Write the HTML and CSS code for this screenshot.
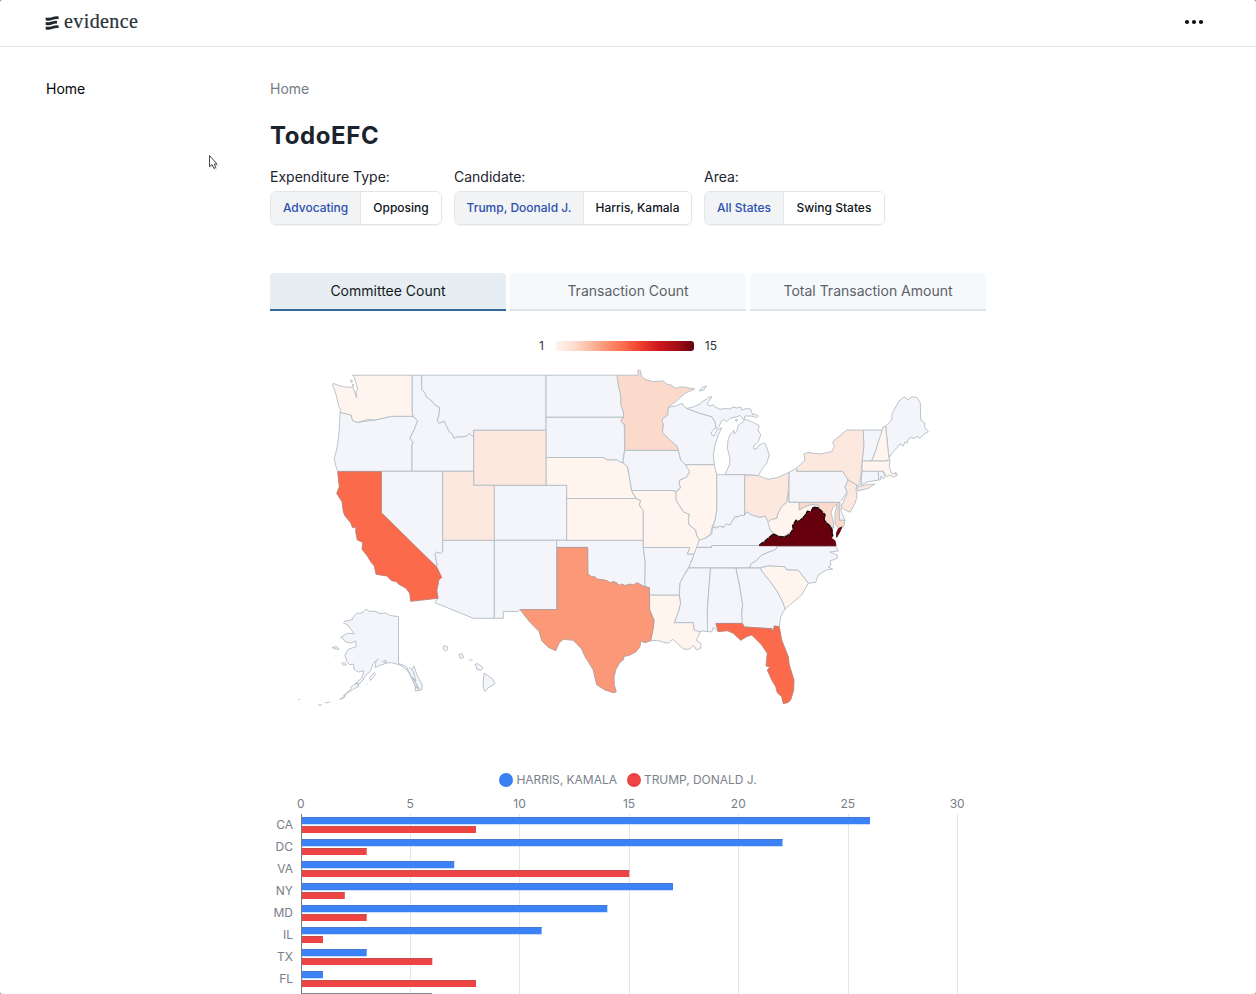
FILE: index.html
```html
<!DOCTYPE html>
<html lang="en">
<head>
<meta charset="utf-8">
<title>TodoEFC</title>
<link rel="stylesheet" href="styles.css">
</head>
<body>
<div class="page">
  <header class="topbar">
    <a class="logo">
      <svg class="logo-mark" width="14" height="14" viewBox="0 0 14 14"><path d="M.7 1.500Q3.700 2.300 6.800 1.200T13.600.400V3Q10.200 2.700 7 4T.7 4.200ZM.7 5.900Q3.700 6.700 6.800 5.600T12 4.900V7.500Q9.800 7.200 7 8.500T.7 8.700ZM.7 10.500Q3.700 11.300 6.800 10.200T13.600 9.400V12Q10.200 11.700 7 13T.7 13.400Z"/></svg>
      <span class="logo-text">evidence</span>
    </a>
    <svg class="more" width="20" height="6" viewBox="0 0 20 6"><circle cx="3" cy="3" r="2.1"/><circle cx="10" cy="3" r="2.1"/><circle cx="17" cy="3" r="2.1"/></svg>
  </header>
  <div class="layout">
    <nav class="sidebar"><a>Home</a></nav>
    <main class="content">
      <div class="crumb">Home</div>
      <h1>TodoEFC</h1>
      <div class="filters">
        <div class="filter"><label>Expenditure Type:</label><div class="group"><button class="on b1">Advocating</button><button class="b2">Opposing</button></div></div>
        <div class="filter"><label>Candidate:</label><div class="group"><button class="on b3">Trump, Doonald J.</button><button class="b4">Harris, Kamala</button></div></div>
        <div class="filter"><label>Area:</label><div class="group"><button class="on b5">All States</button><button class="b6">Swing States</button></div></div>
      </div>
      <div class="tabs"><div class="tab active">Committee Count</div><div class="tab">Transaction Count</div><div class="tab">Total Transaction Amount</div></div>
      <div class="scale"><span>1</span><i class="ramp"></i><span>15</span></div>
      <svg class="map" width="716" height="360" viewBox="270 360 716 360">
        <g class="s0">
          <path d="M340 412.3L340 416.7L339.3 430L337.3 446.7L334.3 458.3L336 466.7L337.7 471.3H412V445L413.3 442.7L410 438.3L414.3 429.3L417.7 420.7L413 416.3L391.7 416.3L375 420L357.7 422.3L352.7 420.7L351 415L347.3 414Z"/>
          <path d="M412 375.2H421.7V389.3L425.3 393.3L426 396.7L431.7 400.7L435 405L439.7 407.7L439.3 413.3L437.3 420.7L439.3 423.3L444 421L446 425L449.3 431.7L451.7 433.3L454.3 438.3L457.3 436.7L461 437L466.7 436L469.3 433.3L473.5 437V471.3H412V445L413.3 442.7L410 438.3L414.3 429.3L417.7 420.7L413 416.3L412 411.7Z"/>
          <path d="M421.7 375.2H546V430.3H473.5V437L469.3 433.3L466.7 436L461 437L457.3 436.7L454.3 438.3L451.7 433.3L449.3 431.7L446 425L444 421L439.3 423.3L437.3 420.7L439.3 413.3L439.7 407.7L435 405L431.7 400.7L426 396.7L425.3 393.3L421.7 389.3Z"/>
          <path d="M546 375.2H617L618.3 385L620.7 395L621 405L623.3 411.7L623.7 417.3H546Z"/>
          <path d="M546 417.3H623.7L620.7 420.7L624.3 425L624.6 450.3L623.7 455L623 461L623.7 463.3L620 462L617.3 460L607.3 460L603.3 457.5H546Z"/>
          <path d="M381.3 471.3H442.7V551.7L440.7 553.7L436.7 552L435 554L437.3 565L436 567L381.3 512.7Z"/>
          <path d="M494.3 485.3H566.7V540.3H494.3Z"/>
          <path d="M442.7 540.3H494.3V618.3H473.3L435 602.7L438 598L436.7 590L438.7 580L441.7 577.3L436 567L437.3 565L435 554L436.7 552L440.7 553.7L442.7 551.7Z"/>
          <path d="M494.3 540.3H556.7V609.5H520L518 611.5H503.3V618.3H494.3Z"/>
          <path d="M556.7 540.3H643.3V547.3L645.3 563.3L644.7 590L600 585L587 575V547.3H556.7Z"/>
          <path d="M624.8 450.3H678.3L679.3 454L680.7 460L685.3 464.3L688 468L689.7 471.7L686.7 477.3L680 480L679 483L680.7 486.7L676.7 491.3L673.3 490.5H631.5L630 481.7L628.7 473.3L627.3 466.7L623.7 463.3L623 461L624 455Z"/>
          <path d="M668 407.3L676.7 405.7L682.3 403.3L683.3 406L688.3 409L700 413.3L711.7 416.7L715 421.7L716 426.7L711.7 432L711.7 435L714 436L717 430L721.7 427.7L718.3 435L715 445L713.3 455L714.3 464.7H685.3L680.7 460L679.3 454L677.3 446.7L671.7 441.7L662.3 432.7L663.3 425L661.5 420L667.7 415Z"/>
          <path d="M686.5 408.5L693 407L700 404L703 401L706.7 399.3L709 397L712 396.7L708.3 401.7L707 404.5L710 406L713.3 404.7L715 407L720 409.3L725 408.500L730 409L733 407L737 408L740.7 406.7L741.7 410L746 408.500L750.7 409L752.7 415L755 414L758.3 416L756.7 417.7L751 416L745 416L744 420L740 415.5L736.7 416.7L730 418.3L726.7 421.7L724 419.5L721.7 420.7L719 426.7L716 429L715 421.7L711.7 416.7L700 413.3L688.3 409Z"/>
          <path d="M745 419.3L751.7 421.7L759.3 425.7L758 430L760.7 435L758.3 441.7L753.5 446L754 449L756.7 449L759 445L763.3 443.3L765.5 444L769.3 455L766.7 463.3L763.3 467.3L758.3 475.5L744.3 474.7H725L729.3 465L730 458.3L727.3 448.3L728 440L730 435L734 430L734 434L736.7 431.7L738.3 425L743.3 421.7Z"/>
          <path d="M699.3 391L702 387.5L706.5 386L703.5 390ZM736 419l1.5.8-.8 1.7-1.2-.8Z"/>
          <path d="M716.6 474.7H744.7V516L735 516.7L730 525L723.3 526.7L712.7 527.3L715 520L716.7 510Z"/>
          <path d="M643.3 547.5H690L687.3 554H694L693.3 556.7L689.3 566L683.3 576.7L680 583.3L679.3 595.2H649.4V587.7L644.7 586.7L645.3 563.3Z"/>
          <path d="M688.7 567.8H710.5L707.3 610L707.7 631.7L703 631L695 633L694 630L693.3 622.7H674.3L678.3 611.7L680.5 603.3L679.3 595L680 583.3L683.3 576.7Z"/>
          <path d="M710.5 568H736L740 588L742.7 605L741.7 613.3L742.7 623.3H716L718 631.7L713.3 627.3L712 631.7H707.5L707.3 610Z"/>
          <path d="M736 568H760.7L761.7 571L771.7 583.3L778.3 593.3L783.3 603.3L785 609L780.7 616.7L779.3 626.7L774 626L773.3 631.3L771.7 628.7L744.3 627L742.3 623.3L741.7 613.3L742.7 605L740 588Z"/>
          <path d="M699.3 540L701.7 536.7L706 538L711.7 534L712.7 527.3L717 528L720 526L723.3 527.7L726 524L730 525L735 516.7L738 517L741 515L744 516L746.7 511.7L751.7 515L760 517.3L765 516L768.3 520.7L770 529.3L773.3 534.3L759.3 545.5H711.7V547.3H695.7Z"/>
          <path d="M695.7 547.5H711.7V545.5H777.3L776 549.3L761.7 555L756 561L750.7 564L750 567.7H688.7L693.3 556.7Z"/>
          <path d="M777.3 546.3H836L838.3 551L830 552L837.3 555L837.3 558.3L830 561L831 565L828 567L832.7 569L826 570L818.3 575L815.7 582.3L808.3 583.3L798.3 570.3L786.7 570L785 566.7L768.3 566L760.7 567.7H750L750.7 564L756 561L761.7 555L776 549.3Z"/>
          <path d="M789 472.3L796.7 468.3V471.3H842.7L846 476.7L848.3 480L845 486.7L847.3 491.7L841.7 500L839.3 502.3H789Z"/>
          <path d="M863.3 430H881.7L882.7 435L878.3 441.7L876 450L871.7 461H862L863.8 446.7Z"/>
          <path d="M885.7 426L891.7 420L892 414L895 408.3L899 401L904.3 396.7L908.3 400L911 397L916.7 397.3L920.3 402.7L920.7 420L925 423.3L924.3 426.7L928.3 431.7L924 434L920 438.3L917 436.500L914 438.500L911 437.500L908.3 439.3L907 443L905 442L903.3 446L900 444L896.7 448L891.7 453.3L889 458.3L887.7 446.7Z"/>
          <path d="M862 471H878.3L878.7 480L868.3 481.7L861 485Z"/><path d="M878.3 471H882.7L885 476.7L883 479L881 476L880.5 480H878.7Z"/>
          <path d="M839 502.5L841.7 505L840.7 510L845 520.3H839.3Z"/>
          <path d="M366 609.3L370 611.5L375 611.2L380 613.5L386 613L390 615.5L398.5 616.7V663.3L405 666L411 671L414 666L417 675L422.3 685L421.7 690L416.7 690L413.3 678.3L406.7 670L400 665L391.7 662.7L388 663L385 660L384 664L379.3 665.500L375 667.7L376 661L378.3 659L373.3 663.3L370 671.7L366 675L361.7 681.7L356.7 686L352 690L343.3 696L353.3 686.7L358 681L361.7 678.3L364 670.7L358.3 672L354 669.3L353.3 664L350 665L346.7 661.7L345 655L348.3 649.3L356 646.7L355.7 641L351 643L345 641.7L343 638.5L340.7 637.3L347.3 633.3L354.3 634L350 628.3L348 625L343.3 622.7L345 621L351.7 620L354 616L356.7 613.3L362 613Z"/>
          <path d="M332 647.5l5-1 2 3-3-.5ZM341.500 663.500l3-1 2 2-3 1ZM369.500 677.500l5-5 1 2-5 6ZM366.500 684.500l1-1M345.500 695.500l-6 4 5-2ZM325 703l5-1M318 705h4M298.500 699.500h1.500M335 656h.7M407 668l4 8 5 5-3-10-4-4M409 674l6 7 3 8-3-3-4-9M413 679l7 11-5 1 1-6M350 688l6-5 3 3-5 3M355 684l3-1 1 4M382 661l5 2-3 1"/>
          <path d="M443.500 646l3.500.3 1 2.700-2.500 2-2.500-2ZM459 654.500l3-1 1.700 4-3.500 1ZM469 660.500l3.500-.8m2.500 4.500 3-.5 5 4-2 2.700-4-1-1-3ZM484 673l8 5.500 3 5-7 4.500-3 3.500-2-5Z"/>
        </g>
        <g class="s1">
          <path d="M352.3 375.200H412V411.7L413 416.3H391.7L375 420L368 419.5L357.7 422.3L352.7 420.7L351 415L347.3 414L340 412.3L341 409.3L339 407.5L337.3 399.5L335 391L332.7 386L333.3 383.3L340 386L348.3 387.3L352.500 387L354.7 391.7L356.7 397.7L356 391.7L357.7 389.3L355.7 381.7L354.3 377.3ZM350.5 380l2 .7-1 2ZM352.5 384l1.500 1-1 1.500Z"/>
          <path d="M546 457.500H603.3L607.3 460H617.3L620 462L623.7 463.3L627.3 466.7L628.7 473.3L630 481.7L631.3 490L636 498.500H566.7V485.300H546Z"/>
          <path d="M566.700 498.500H636L640.7 500.7L639.3 505L643.3 510.7V540.300H566.700Z"/>
          <path d="M631.500 490.500H673.3L676 492.3V500L683.3 511.7L689.3 514.3L688.3 520L689.3 525L695.7 530L696.7 535L699.3 540L696.7 547.3L694 554H687.3L690 547.500H643.3V510.7L639.3 505L640.7 500.7L636 498.300Z"/>
          <path d="M685.3 464.700H714.3L716.7 475V510L715 520L711.7 528.3L710.7 534L705 538.3L699.3 540L696.7 535L695.7 530L689.3 525L688.3 520L689.3 514.3L683.3 511.7L676 500V492.3L680.7 488L679 483L680 480L686.7 477.3L689.7 471.7Z"/>
          <path d="M649.400 595.200H679.3L680.500 603.3L678.3 611.7L674.3 622.700H693.3L694 630L700 631.7L698.3 636.7L696 640L701 643.500L700.7 648.3L696.7 650L693.3 645.3L689.3 649.3L683.3 649L676.7 642.7L672.7 639.3L668.3 643.3L656.7 640.3L650.7 640.7L654 620L649.500 610Z"/>
          <path d="M760.7 567.7L768.3 566L785 566.7L786.7 570L798.3 570.3L808.3 583.3L801.7 595L785 609L783.3 603.3L778.3 593.3L771.7 583.3L761.7 571Z"/>
          <path d="M788.5 491.7L789 502.300H799.3V510L805 506.7L811.7 504.3L818.3 505L819.3 508.3L811.7 512L805 516L798.3 521.7L791.7 531.7L783.3 536.7L775 535L770 529.3L767.7 521.700L771.7 519.3L776.7 518.3L778 513L781.7 506.7L786.7 501.7Z"/>
          <path d="M881.7 432L883.3 426.7L885.7 426L887.7 446.7L889 458.3L886.7 461H871.7L876 450L878.3 441.7Z"/>
          <path d="M862 461H886.7L890 459.500L889.3 466.7L891.7 473.3L896 474L895.500 472L897.7 475L893.3 477.3L890 475L886.7 476.7L883.3 471.200H862Z"/>
        </g>
        <g class="s2">
          <path d="M473.700 430.300H546V485.300H473.700Z"/><path d="M442.700 471.300H473.700V485.300H494.300V540.300H442.700Z"/>
          <path d="M744.7 475L758.3 475.7L768.3 479.3L778.3 477.3L789 472.3L788.3 491.7L786.7 501.7L781.7 506.7L778 513L776.7 518.3L771.7 519.3L768.3 521.7L765 516L760 517.3L751.7 515L746.7 511.7L744.7 515Z"/>
          <path d="M796.7 468L805 460L804 454L808 452.500L820 454L831.7 451.7L834.3 446.7L832.7 441.7L846.7 430H863.3L863.800 446.7L862 461.7L861 473.3L860 483.3L858.3 486L848.3 480L846 476.7L842.7 471.300H796.7ZM857.3 487.3L865 485L875 484L868.3 488.3L857.3 491Z"/>
          <path d="M848.3 480L856.7 485L856 490L857 496.7L855 503.3L850 512.3L841.7 508.3V505L847.3 493.3L845 486.7Z"/>
        </g>
        <g class="s3">
          <path d="M617 375.200H638.3L637.7 370.300H640.3L641.7 376.7L645 379.3L653.3 381.7L663.3 381L667.3 384.3L671 385L675 388.3L681.7 386.7L694.7 389L685 393.3L676.7 400.7L668 407.3L667.7 415L662 419.500L663.3 425L662.3 432.7L671.7 441.7L677.3 446.7L678.3 450.300H624.800V425L620.7 420.7L623.7 417.3L623.3 411.7L621 405L620.7 395L618.3 385Z"/>
          <path d="M799.3 502.500H839L839.3 520.300H845L844 526L838.3 528.3L835 524L835 514L837 504L833 507L831 513L833 520L834 528L829 524L823 520L825 515L820 509L818.3 505L811.7 504.3L805 506.7L799.3 510Z"/>
        </g>
        <path class="s4" d="M557 547.500H587.700L588 574L591.7 576.7L595 576.7L596.7 579L602 579.500L607.3 580.7L610 582.7L614 581.500L617.3 583.3L619.3 585.3L622 584L625 585.500L630 584L633 585L637.3 582.7L643.3 586L649.3 587.7L649.7 610L654 620L653.3 628.3L650.7 640.7L645 642.7L640.7 641L640 646.7L636 651.7L630 655L623.3 656.7L624 659L619.3 663.3L616 669.3L614 676.7L614.3 685L616.3 692L613.3 692.7L605 690L596.7 684.7L594.7 676.7L593.3 670L588.3 661.7L585 656.7L581.7 649L573.3 640.3L563.3 639.3L559.3 642.7L555.7 650.7L548.3 647.3L541.7 640.7L539.3 631.7L530 622.3L520 609.500H557Z"/>
        <g class="s5">
          <path d="M337.7 471.700H381.3V512.7L436.7 567L441.7 577.3L438.7 580L438 585L436.7 590L438 598.3L410.7 601.3L409.7 593.3L406 588.3L398.3 584L396.7 581.7L391.7 580.7L386.7 576L376 574.3L374.3 566L370.7 561.7L367.3 556L362 549.3L362.7 542.3L357.3 540L355.7 531.7L356 526L354.3 528L352.3 527.3L350.7 522.7L345 516L343.3 511.7L342 501.7L336.7 493.3L339.3 486.7L338.3 478.3Z"/>
          <path d="M716 623.500H742.3L744.3 627L771.7 628.7L773.3 631.3L774.3 626L779.3 626.7L781.7 640L788.3 656.7L789.3 665L794 680L793.7 690L790.7 700L788 702.500L783.3 703.7L781.7 696.7L777.3 692.7L775.7 686.7L771.7 680L767.3 670L770 666.7L766 666L767.3 653.3L761.7 645L751.7 635L747 636.500L740.7 640.3L733.3 633.3L727.3 630.7L718.3 631.7Z"/>
        </g>
        <path class="s6" d="M759.3 545.7L765 541.7L773.3 534.3L780 537.3L786 537L790 534.3L793.3 529.3L792.7 526L796 520.7L799.3 521.7L805 516L807.3 511.7L810.7 512.7L813.3 507.3L818.3 508.3L821.7 511.7L825 515L824 520.7L831.7 528.3L832.7 536.7L831 538L835 540.7L836 545.700ZM842 527L838.500 528.500L836.500 533L836.700 537.300L839.500 532.500Z"/>
        <path class="va-edge" d="M759.3 545L765 541L773.3 533.800L780 537L786 536.500L790 533.800L793.3 528.800L792.7 525.500L796 520.200L799.3 521.200L805 515.500L807.3 511.200L810.7 512.200L813.3 507L818.3 508L821.7 511.200L825 514.500L824 520L831.7 528L832.7 536"/>
      </svg>
      <div class="legend"><i class="dot blue"></i><span>HARRIS, KAMALA</span><i class="dot red"></i><span>TRUMP, DONALD J.</span></div>
      <svg class="chart" width="716" height="200" viewBox="270 794 716 200">
        <g class="grid"><path d="M410.500 814V994M519.500 814V994M629.500 814V994M738.500 814V994M848.500 814V994M957.500 814V994"/></g>
        <g class="ticks"><text x="300.800" y="807.500">0</text><text x="410.200" y="807.500">5</text><text x="519.500" y="807.500">10</text><text x="629" y="807.500">15</text><text x="738.300" y="807.500">20</text><text x="847.800" y="807.500">25</text><text x="957.200" y="807.500">30</text></g>
        <g class="names"><text x="293" y="828.500">CA</text><text x="293" y="850.500">DC</text><text x="293" y="872.500">VA</text><text x="293" y="894.500">NY</text><text x="293" y="916.500">MD</text><text x="293" y="938.500">IL</text><text x="293" y="960.500">TX</text><text x="293" y="982.500">FL</text></g>
        <path class="harris" d="M301 817H870V824.300H301ZM301 839H782.500V846.300H301ZM301 861H454.200V868.300H301ZM301 883H673V890.300H301ZM301 905H607.300V912.300H301ZM301 927H541.600V934.300H301ZM301 949H366.700V956.300H301ZM301 971H323V978.300H301Z"/>
        <path class="trump" d="M301 826H476V833H301ZM301 848H366.700V855H301ZM301 870H629.300V877H301ZM301 892H344.800V899H301ZM301 914H366.700V921H301ZM301 936H323V943H301ZM301 958H432.300V965H301ZM301 980H476V987H301Z"/>
        <path class="harris-shade" d="M301 817.500H870M301 839.500H782.500M301 861.500H454.200M301 883.500H673M301 905.500H607.300M301 927.500H541.600M301 949.500H366.700M301 971.500H323"/>
        <path class="trump-shade" d="M301 826.500H476M301 848.500H366.700M301 870.500H629.300M301 892.500H344.800M301 914.500H366.700M301 936.500H323M301 958.500H432.300M301 980.500H476"/>
        <path class="cut" d="M301 993.500H432"/>
        <path class="axis" d="M301.500 814V994"/>
      </svg>
    </main>
  </div>
  <svg class="cursor" width="12" height="18" viewBox="0 0 12 18"><path class="halo" d="M2 3V14L4.500 12L7 16L9 15L8 11.500H10.500Z"/><path d="M1.500 1.500V12.500L4 10.500L6 14.500L7.500 13.500L6.500 10H9Z"/></svg>
</div>
</body>
</html>
```
FILE: styles.css
```css
* { box-sizing: border-box; }
html { background: #666; }
body { margin: 0; font-family: Inter, "Liberation Sans", sans-serif; color: #1c2530; font-size: 14px; }
.page { position: relative; width: 1256px; height: 994px; overflow: hidden; background: #fff; border-radius: 2px; }
.topbar { height: 47px; border-bottom: 1px solid #e3e5e7; display: flex; align-items: center; justify-content: space-between; padding: 0 52px 3px 45px; }
.logo { display: flex; align-items: center; gap: 5px; }
.logo-mark { fill: #1f272e; margin-top: 3px; }
.logo-text { font-family: "Liberation Serif", serif; font-size: 20px; line-height: 22px; margin-top: -2px; letter-spacing: 0.4px; color: #28313a; -webkit-text-stroke: 0.2px #28313a; }
.more { fill: #0b0f14; }
.layout { display: flex; padding-left: 46px; }
.sidebar { width: 224px; padding-top: 32px; line-height: 20px; color: #05070a; }
.content { width: 716px; padding-top: 32px; }
.crumb { line-height: 20px; color: #747b84; }
h1 { margin: 20px 0 0; font-size: 24px; line-height: 34px; font-weight: 700; letter-spacing: 0.6px; color: #1b242d; }
.filters { display: flex; gap: 12px; margin-top: 14px; }
.filter { display: flex; flex-direction: column; }
.filter label { height: 24px; line-height: 20px; white-space: nowrap; }
.group { display: flex; height: 34px; border: 1px solid #e2e5e8; border-radius: 6px; overflow: hidden; box-shadow: 0 1px 1px #0000000c; }
.group button { border: 0; padding: 0; margin: 0; background: #fff; font: 500 12px/32px Inter, sans-serif; color: #0f151c; white-space: nowrap; text-align: center; }
.group .on { background: #f1f3f5; color: #2c4fae; border-right: 1px solid #e2e5e8; }
.group .b1 { width: 90px; letter-spacing: -0.03px; } .b2 { width: 80px; }
.b3 { width: 129px; } .b4 { width: 107px; }
.b5 { width: 79px; } .b6 { width: 100px; }
.tabs { display: grid; grid-template-columns: repeat(3, 1fr); gap: 4px; margin-top: 48px; }
.tab { height: 38px; line-height: 36px; text-align: center; color: #5c6167; background: #f6f9fc; border-bottom: 2px solid #dfe3e6; border-radius: 4px 4px 0 0; }
.tab.active { background: #e6edf3; color: #141a20; border-bottom-color: #316a9c; }
.scale { height: 16px; margin-top: 27px; display: flex; align-items: center; justify-content: center; gap: 11px; font-size: 12px; color: #2d3540; }
.scale span { margin-top: -1px; }
.ramp { width: 139px; height: 10px; border-radius: 3px; background: linear-gradient(90deg, #fff5f0, #fee0d2 12.5%, #fcbba1 25%, #fc9272 37.5%, #fb6a4a 50%, #ef3b2c 62.5%, #cb181d 75%, #a50f15 87.5%, #67000d); }
.map { display: block; margin-top: 6px; stroke: #b3bdc5; stroke-width: 0.9; stroke-linejoin: round; }
.s0 { fill: #f3f5fa; } .s1 { fill: #fff4ee; } .s2 { fill: #fce8df; }
.s3 { fill: #fbdacc; } .s4 { fill: #fb9878; stroke: #b29a98; }
.s5 { fill: #fb6a4a; stroke: #bd8078; } .s6 { fill: #67000d; stroke: #67000d; }
.va-edge { fill: none; stroke: #160609; stroke-width: 1.3; stroke-dasharray: 5 1; }
.legend { display: flex; align-items: center; justify-content: center; height: 20px; margin-top: 50px; font-size: 12px; line-height: 20px; color: #7b828b; letter-spacing: -0.03px; }
.dot { width: 14px; height: 14px; border-radius: 50%; margin-right: 3px; }
.blue { background: #3b80f2; } .red { background: #ec4544; margin-left: 10px; }
.chart { display: block; margin-top: 4px; font-size: 12px; fill: #777e87; }
.grid { stroke: #e4e7ea; } .ticks { text-anchor: middle; } .names { text-anchor: end; }
.harris { fill: #3b82f6; } .trump { fill: #ef4444; }
.harris-shade { stroke: #4879cd; } .trump-shade { stroke: #c94c4d; }
.cut { stroke: #7d858f; } .axis { stroke: #747c85; }
.cursor { position: absolute; left: 208px; top: 154px; fill: #fff; stroke: #30343a; stroke-width: 0.9; }
.cursor .halo { fill: #ddd; stroke: #e2e2e2; }
```
